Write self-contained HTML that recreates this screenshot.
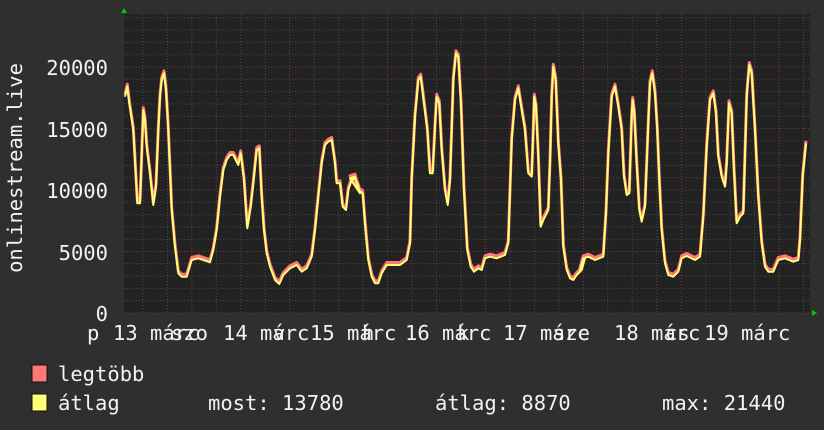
<!DOCTYPE html>
<html><head><meta charset="utf-8">
<style>
html,body{margin:0;padding:0;background:#2f2f2f;width:824px;height:430px;overflow:hidden}
svg{display:block}
text{font-family:"DejaVu Sans Mono","Liberation Mono",monospace;font-size:20.5px;fill:#f2f2f2}
</style></head>
<body>
<svg id="s" width="824" height="430" xmlns="http://www.w3.org/2000/svg">
<rect x="0" y="0" width="824" height="430" fill="#2f2f2f"/>
<rect x="124" y="14" width="686" height="299" fill="#222222"/>
<g id="grid"></g>
<polygon points="121,13 124,8 127,13" fill="#00cc00"/>
<polygon points="812,310 817,313 812,316" fill="#00cc00"/>
<polyline id="pk" fill="none" stroke="#ff7777" stroke-width="3" stroke-linejoin="round" transform="translate(0,-2.5)"/>
<polyline id="yl" fill="none" stroke="#ffff77" stroke-width="2" stroke-linejoin="round"/>
<g text-anchor="end">
<text x="108" y="75">20000</text>
<text x="108" y="137">15000</text>
<text x="108" y="198">10000</text>
<text x="108" y="260">5000</text>
<text x="108" y="321">0</text>
</g>
<text transform="translate(22,168) rotate(-90)" text-anchor="middle">onlinestream.live</text>
<g>
<text x="87" y="340">p</text>
<text x="113" y="340">13 márc</text>
<text x="171" y="340">szo</text>
<text x="223" y="340">14 márc</text>
<text x="273" y="340">v</text>
<text x="310" y="340">15 márc</text>
<text x="362" y="340">h</text>
<text x="405" y="340">16 márc</text>
<text x="457" y="340">k</text>
<text x="503" y="340">17 márc</text>
<text x="553" y="340">sze</text>
<text x="614" y="340">18 márc</text>
<text x="665" y="340">cs</text>
<text x="704" y="340">19 márc</text>
</g>
<rect x="32" y="365" width="15" height="17" fill="#ff7777" stroke="#111" stroke-width="1"/>
<rect x="32" y="394" width="15" height="17" fill="#ffff77" stroke="#111" stroke-width="1"/>
<text x="58" y="381">legtöbb</text>
<text x="58" y="410">átlag</text>
<text x="208" y="410">most: 13780</text>
<text x="435" y="410">átlag: 8870</text>
<text x="662" y="410">max: 21440</text>
</svg>
<script>
var NS="http://www.w3.org/2000/svg",g=document.getElementById("grid"),h="";
for(var i=0;i<25;i++){var y=313-i*12.3;if(y<14)break;var red=(i%5==0);
h+='<line x1="124" x2="810" y1="'+y+'" y2="'+y+'" stroke="'+(red?'#7a3a3a':'#4a4a4a')+'" stroke-width="1" stroke-dasharray="1,2"/>';}
for(var k=0;k<40;k++){var x=142.9+k*24.47;if(x>810)break;var r=((k-2)%4==0);
h+='<line y1="14" y2="313" x1="'+x+'" x2="'+x+'" stroke="'+(r?'#7a3a3a':'#4a4a4a')+'" stroke-width="1" stroke-dasharray="1,2"/>';}
g.innerHTML=h;
var A=[[15,200],[22,170],[28,220],[40,300],[47,430],[52,520],[60,520],[65,380],[70,240],[75,270],[80,350],[90,430],[100,525],[108,470],[115,300],[120,200],[125,150],[132,130],[138,180],[145,300],[155,540],[165,650],[175,730],[185,740],[200,740],[215,690],[235,685],[270,697],[280,660],[290,600],[300,500],[310,420],[320,390],[330,375],[340,375],[355,405],[362,370],[372,450],[382,595],[392,530],[400,460],[410,360],[418,355],[425,500],[432,600],[440,670],[450,710],[465,750],[478,762],[490,735],[510,715],[530,705],[545,725],[560,715],[575,680],[585,600],[595,500],[605,400],[615,345],[625,335],[635,330],[645,400],[650,460],[660,460],[668,530],[678,540],[685,480],[695,450],[705,445],[715,470],[720,490]];
var B=[[0,445],[15,440],[25,480],[38,490],[45,580],[55,690],[65,740],[75,760],[85,760],[95,730],[110,705],[125,705],[150,705],[170,690],[180,640],[185,450],[195,260],[205,150],[212,140],[222,220],[232,300],[240,430],[248,430],[255,290],[260,200],[268,220],[275,360],[285,480],[293,525],[300,450],[305,300],[310,150],[318,70],[325,80],[333,220],[342,480],[352,660],[362,710],[372,725],[385,715],[395,720],[405,685],[420,680],[440,685],[465,675],[475,640],[485,330],[495,210],[505,175],[515,240],[525,300],[535,430],[545,440],[550,300],[553,200],[558,230],[565,380],[572,590],[580,570],[595,540],[600,400],[605,200],[610,110],[617,150],[625,340],[633,450],[640,650],[650,720],[660,745],[670,750],[680,735],[695,720],[705,685]];
var C=[[0,720],[10,685],[25,680],[45,690],[70,680],[78,550],[85,370],[95,200],[105,170],[115,230],[125,300],[132,440],[140,495],[148,490],[155,260],[158,210],[163,250],[170,400],[178,540],[185,575],[195,530],[205,280],[210,160],[217,130],[225,190],[232,300],[238,450],[245,600],[255,700],[265,735],[280,740],[295,725],[305,685],[320,678],[345,690],[360,680],[370,560],[380,350],[390,210],[400,190],[408,250],[415,380],[425,440],[435,470],[440,400],[447,220],[455,250],[462,420],[470,580],[480,560],[490,550],[500,200],[508,105],[515,130],[525,300],[535,500],[545,640],[555,710],[565,725],[580,725],[595,690],[615,685],[640,695],[655,690],[660,630],[668,440],[678,340]];
var pts=[];
function add(L,ox){L.forEach(function(p){pts.push((ox+p[0]/3).toFixed(1)+","+(30+p[1]/3).toFixed(1));});}
add(A,120);add(B,350);add(C,580);
var s=pts.join(" ");
document.getElementById("pk").setAttribute("points",s);
document.getElementById("yl").setAttribute("points",s);
</script>
</body></html>
